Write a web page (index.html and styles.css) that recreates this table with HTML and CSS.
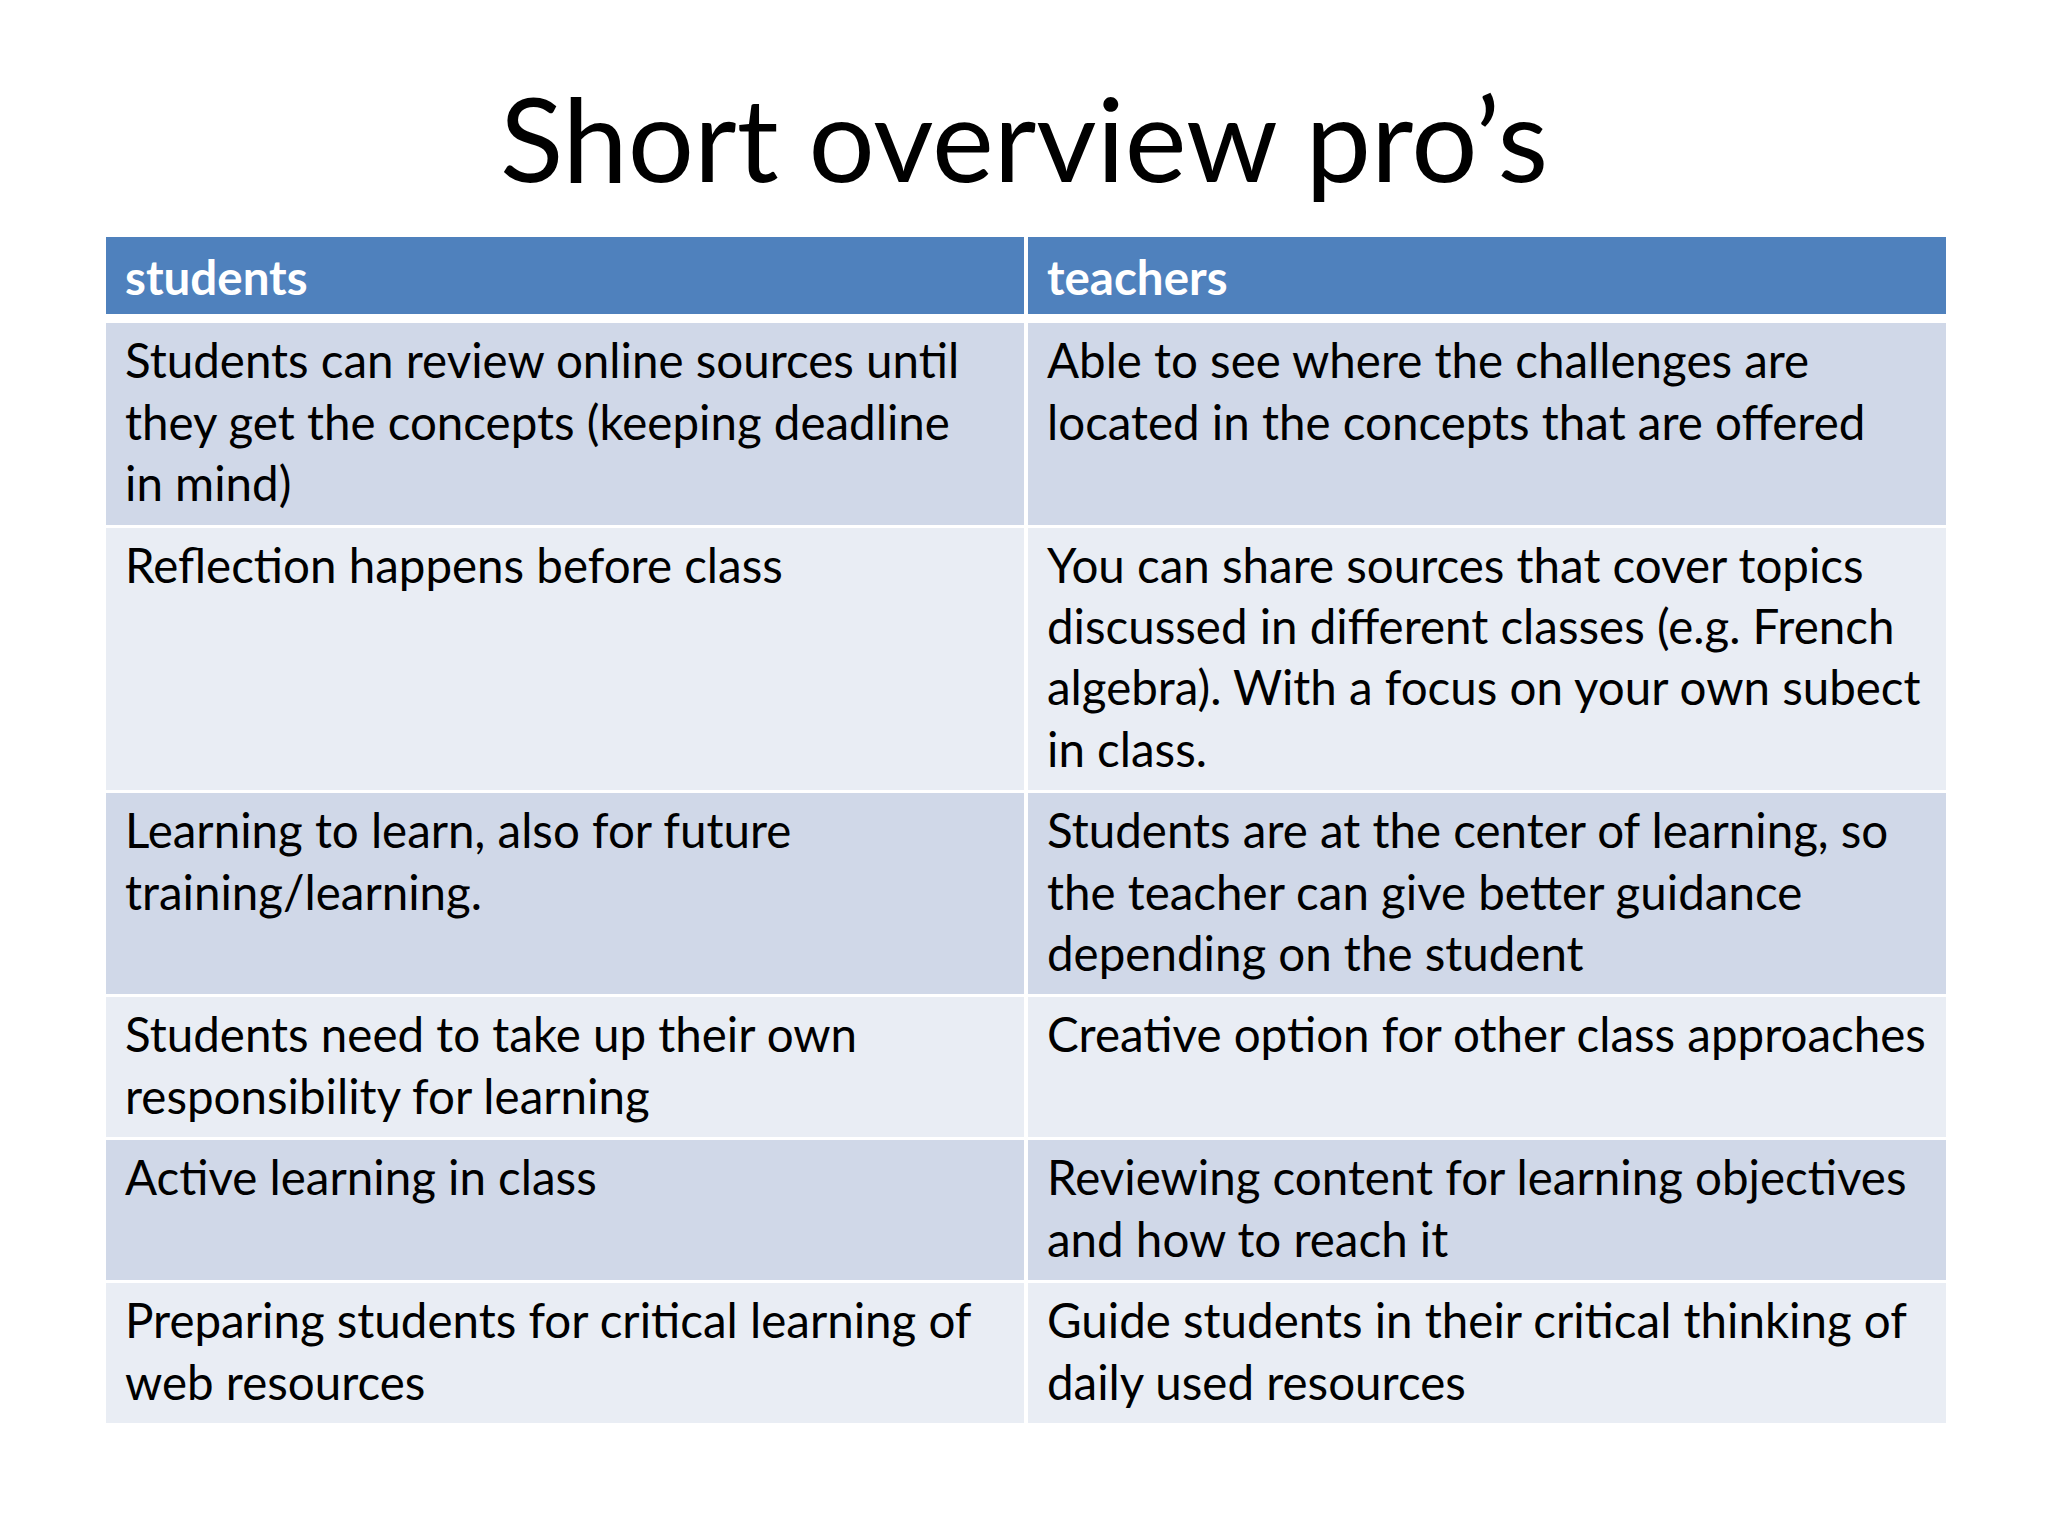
FILE: index.html
```html
<!DOCTYPE html>
<html>
<head>
<meta charset="utf-8">
<title>Short overview pro’s</title>
<link rel="stylesheet" href="styles.css">
</head>
<body>
<div class="slide">
  <h1 class="title">Short overview pro’s</h1>
  <div class="table">
    <div class="cell th">students</div>
    <div class="cell th">teachers</div>

    <div class="cell dark">Students can review online sources until<br>they get the concepts (keeping deadline<br>in mind)</div>
    <div class="cell dark">Able to see where the challenges are<br>located in the concepts that are offered</div>

    <div class="cell light">Reflection happens before class</div>
    <div class="cell light">You can share sources that cover topics<br>discussed in different classes (e.g. French<br>algebra). With a focus on your own subect<br>in class.</div>

    <div class="cell dark">Learning to learn, also for future<br>training/learning.</div>
    <div class="cell dark">Students are at the center of learning, so<br>the teacher can give better guidance<br>depending on the student</div>

    <div class="cell light">Students need to take up their own<br>responsibility for learning</div>
    <div class="cell light">Creative option for other class approaches</div>

    <div class="cell dark">Active learning in class</div>
    <div class="cell dark">Reviewing content for learning objectives<br>and how to reach it</div>

    <div class="cell light">Preparing students for critical learning of<br>web resources</div>
    <div class="cell light">Guide students in their critical thinking of<br>daily used resources</div>
  </div>
</div>
</body>
</html>
```
FILE: styles.css
```css
html, body {
  margin: 0;
  padding: 0;
  background: #ffffff;
}

.slide {
  width: 2048px;
  height: 1536px;
  font-family: Lato, "Open Sans", "Liberation Sans", sans-serif;
  color: #000000;
  overflow: hidden;
}

.title {
  margin: 67px 0 30px 0;
  font-size: 117px;
  line-height: 140px;
  font-weight: 400;
  text-align: center;
}

.table {
  margin-left: 106px;
  width: 1840px;
  display: grid;
  grid-template-columns: 918px 918px;
  column-gap: 4px;
  row-gap: 3px;
}

.cell {
  padding: 6px 10px 11px 19px;
  font-size: 47.5px;
  line-height: 61.4px;
  white-space: nowrap;
}

.th {
  background: #4f81bd;
  color: #ffffff;
  font-weight: 700;
  padding-top: 9px;
  padding-bottom: 7px;
  margin-bottom: 6px;
}

.dark {
  background: #d0d8e8;
}

.light {
  background: #e9edf4;
}
```
